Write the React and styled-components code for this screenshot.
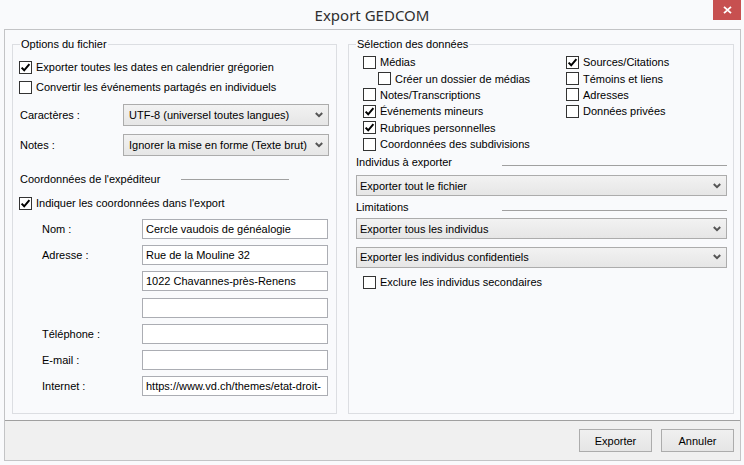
import React from "react";
import styled, { createGlobalStyle } from "styled-components";

const GlobalStyle = createGlobalStyle`
  html, body {
    margin: 0;
    padding: 0;
    background: #f9fafc;
  }
  body {
    font-family: "Liberation Sans", Arial, sans-serif;
    font-size: 11px;
    color: #000;
  }
  *, *::before, *::after {
    box-sizing: border-box;
  }
`;

const Window = styled.div`
  width: 744px;
  height: 465px;
  display: flex;
  flex-direction: column;
  background: #f9fafc;
  overflow: hidden;
`;

const TitleBar = styled.div`
  height: 29px;
  flex-shrink: 0;
  display: grid;
  grid-template-columns: 1fr auto 1fr;
  align-items: start;
`;

const Title = styled.div`
  grid-column: 2;
  font-family: "Noto Sans", "Open Sans", sans-serif;
  font-size: 15px;
  line-height: 30px;
  color: #2f2f2f;
`;

const CloseButton = styled.div`
  grid-column: 3;
  justify-self: end;
  width: 28px;
  height: 20px;
  margin-right: 3px;
  background: #c75050;
  display: flex;
  align-items: center;
  justify-content: center;
`;

const Frame = styled.div`
  height: 432px;
  margin: 0 3px 0 4px;
  border: 1px solid #c3c4c6;
  display: flex;
  flex-direction: column;
`;

const Body = styled.div`
  flex: 1;
  display: flex;
  gap: 11px;
  padding: 7px 6px 6px 7px;
`;

const GroupBox = styled.fieldset`
  margin: 0;
  min-width: 0;
  border: 1px solid #dcdee2;
  padding: 0 ${(p) => p.$padRight}px 0 7px;
  width: ${(p) => (p.$width ? `${p.$width}px` : "auto")};
  flex: ${(p) => (p.$width ? "none" : "1")};
  display: flex;
  flex-direction: column;
`;

const Legend = styled.legend`
  padding: 0 1px;
  line-height: 14px;
  font-size: 11px;
`;

const CheckRow = styled.label`
  display: flex;
  align-items: center;
  gap: 4px;
  height: ${(p) => p.$h}px;
  margin-top: ${(p) => p.$mt || 0}px;
  padding-left: ${(p) => p.$indent || 0}px;
  white-space: nowrap;
`;

const Box = styled.span`
  width: 13px;
  height: 13px;
  flex-shrink: 0;
  margin-left: ${(p) => p.$shift || 0}px;
  border: 1px solid #333;
  background: #fff;
  display: flex;
  align-items: center;
  justify-content: center;
`;

const SelectRow = styled.div`
  display: grid;
  grid-template-columns: 103px 1fr;
  align-items: center;
  margin-top: ${(p) => p.$mt}px;
`;

const Combo = styled.div`
  height: ${(p) => p.$h}px;
  margin-top: ${(p) => p.$mt || 0}px;
  border: 1px solid #acacac;
  background: linear-gradient(#f2f2f2, #e6e6e6);
  display: flex;
  align-items: center;
  justify-content: space-between;
  padding: 0 5px 0 ${(p) => p.$padLeft}px;
  white-space: nowrap;
`;

const SectionHeader = styled.div`
  display: grid;
  grid-template-columns: ${(p) => p.$labelWidth}px ${(p) => (p.$lineWidth ? `${p.$lineWidth}px` : "1fr")};
  align-items: start;
  height: 14px;
  line-height: 14px;
  margin-top: ${(p) => p.$mt}px;
`;

const HeaderLine = styled.div`
  height: 1px;
  background: #a0a0a0;
  margin-top: ${(p) => p.$offset}px;
`;

const FieldList = styled.div`
  display: flex;
  flex-direction: column;
  gap: 6.2px;
  margin-top: 6px;
`;

const FieldRow = styled.div`
  display: grid;
  grid-template-columns: 100px 186px;
  align-items: center;
  padding-left: 22px;
`;

const TextInput = styled.input`
  grid-column: 2;
  height: 20px;
  width: 186px;
  margin: 0;
  border: 1px solid #abadb3;
  background: #fff;
  padding: 0 3px;
  font-family: "Liberation Sans", Arial, sans-serif;
  font-size: 11px;
  color: #000;
  outline: none;
`;

const CheckColumns = styled.div`
  display: grid;
  grid-template-columns: 203px 1fr;
  padding-left: 7px;
  margin-top: 3px;
`;

const CheckColumn = styled.div`
  display: flex;
  flex-direction: column;
`;

const Footer = styled.div`
  height: 40px;
  border-top: 1px solid #a0a0a0;
  background: #f0f0f0;
  display: flex;
  justify-content: flex-end;
  align-items: flex-start;
  gap: 9px;
  padding: 8px 6px 0 0;
`;

const Button = styled.button`
  width: 73px;
  height: 23px;
  margin: 0;
  border: 1px solid #acacac;
  background: linear-gradient(#f0f0f0, #e5e5e5);
  font-family: "Liberation Sans", Arial, sans-serif;
  font-size: 11px;
  color: #000;
  padding: 0;
`;

const CheckMark = () => (
  <svg width="11" height="11" viewBox="0 0 11 11">
    <path d="M1.6 5.6 L4.2 8.3 L9.4 2.2" fill="none" stroke="#000" strokeWidth="2" />
  </svg>
);

const Chevron = () => (
  <svg width="8" height="6" viewBox="0 0 8 6">
    <path d="M0.8 1 L4 4.2 L7.2 1" fill="none" stroke="#555" strokeWidth="2" />
  </svg>
);

const Check = ({ checked, label, h = 20, mt, indent, boxShift }) => (
  <CheckRow $h={h} $mt={mt} $indent={indent}>
    <Box $shift={boxShift}>{checked && <CheckMark />}</Box>
    <span>{label}</span>
  </CheckRow>
);

const Select = ({ value, h = 22, mt, padLeft = 5 }) => (
  <Combo $h={h} $mt={mt} $padLeft={padLeft}>
    <span>{value}</span>
    <Chevron />
  </Combo>
);

const senderFields = [
  { label: "Nom :", value: "Cercle vaudois de généalogie" },
  { label: "Adresse :", value: "Rue de la Mouline 32" },
  { label: "", value: "1022 Chavannes-près-Renens" },
  { label: "", value: "" },
  { label: "Téléphone :", value: "" },
  { label: "E-mail :", value: "" },
  { label: "Internet :", value: "https://www.vd.ch/themes/etat-droit-" },
];

const leftChecks = [
  { label: "Médias", checked: false },
  { label: "Créer un dossier de médias", checked: false, indent: 15 },
  { label: "Notes/Transcriptions", checked: false },
  { label: "Événements mineurs", checked: true },
  { label: "Rubriques personnelles", checked: true },
  { label: "Coordonnées des subdivisions", checked: false },
];

const rightChecks = [
  { label: "Sources/Citations", checked: true },
  { label: "Témoins et liens", checked: false },
  { label: "Adresses", checked: false },
  { label: "Données privées", checked: false },
];

export default function App() {
  return (
    <>
      <GlobalStyle />
      <Window>
        <TitleBar>
          <Title>Export GEDCOM</Title>
          <CloseButton>
            <svg width="9" height="8" viewBox="0 0 9 8">
              <path d="M1 0.8 L8 7.2 M8 0.8 L1 7.2" stroke="#fff" strokeWidth="1.8" />
            </svg>
          </CloseButton>
        </TitleBar>
        <Frame>
          <Body>
            <GroupBox $width={325} $padRight={7}>
              <Legend>Options du fichier</Legend>
              <Check checked label="Exporter toutes les dates en calendrier grégorien" mt={6} boxShift={-1} />
              <Check label="Convertir les événements partagés en individuels" boxShift={-1} />
              <SelectRow $mt={7}>
                <span>Caractères :</span>
                <Select value="UTF-8 (universel toutes langues)" />
              </SelectRow>
              <SelectRow $mt={8}>
                <span>Notes :</span>
                <Select value="Ignorer la mise en forme (Texte brut)" />
              </SelectRow>
              <SectionHeader $mt={16} $labelWidth={161} $lineWidth={108}>
                <span>Coordonnées de l'expéditeur</span>
                <HeaderLine $offset={7} />
              </SectionHeader>
              <Check checked label="Indiquer les coordonnées dans l'export" mt={7} boxShift={-1} />
              <FieldList>
                {senderFields.map((f, i) => (
                  <FieldRow key={i}>
                    {f.label && <span>{f.label}</span>}
                    <TextInput readOnly defaultValue={f.value} />
                  </FieldRow>
                ))}
              </FieldList>
            </GroupBox>

            <GroupBox $padRight={6}>
              <Legend>Sélection des données</Legend>
              <CheckColumns>
                <CheckColumn>
                  {leftChecks.map((c) => (
                    <Check key={c.label} h={16.4} checked={c.checked} label={c.label} indent={c.indent} />
                  ))}
                </CheckColumn>
                <CheckColumn>
                  {rightChecks.map((c) => (
                    <Check key={c.label} h={16.4} checked={c.checked} label={c.label} />
                  ))}
                </CheckColumn>
              </CheckColumns>
              <SectionHeader $mt={3} $labelWidth={146}>
                <span>Individus à exporter</span>
                <HeaderLine $offset={10} />
              </SectionHeader>
              <Select value="Exporter tout le fichier" h={21} mt={6} padLeft={3} />
              <SectionHeader $mt={4} $labelWidth={146}>
                <span>Limitations</span>
                <HeaderLine $offset={10} />
              </SectionHeader>
              <Select value="Exporter tous les individus" h={21} mt={4} padLeft={3} />
              <Select value="Exporter les individus confidentiels" h={21} mt={7.5} padLeft={3} />
              <CheckColumns>
                <Check h={16.4} label="Exclure les individus secondaires" mt={3} />
              </CheckColumns>
            </GroupBox>
          </Body>
          <Footer>
            <Button>Exporter</Button>
            <Button>Annuler</Button>
          </Footer>
        </Frame>
      </Window>
    </>
  );
}
